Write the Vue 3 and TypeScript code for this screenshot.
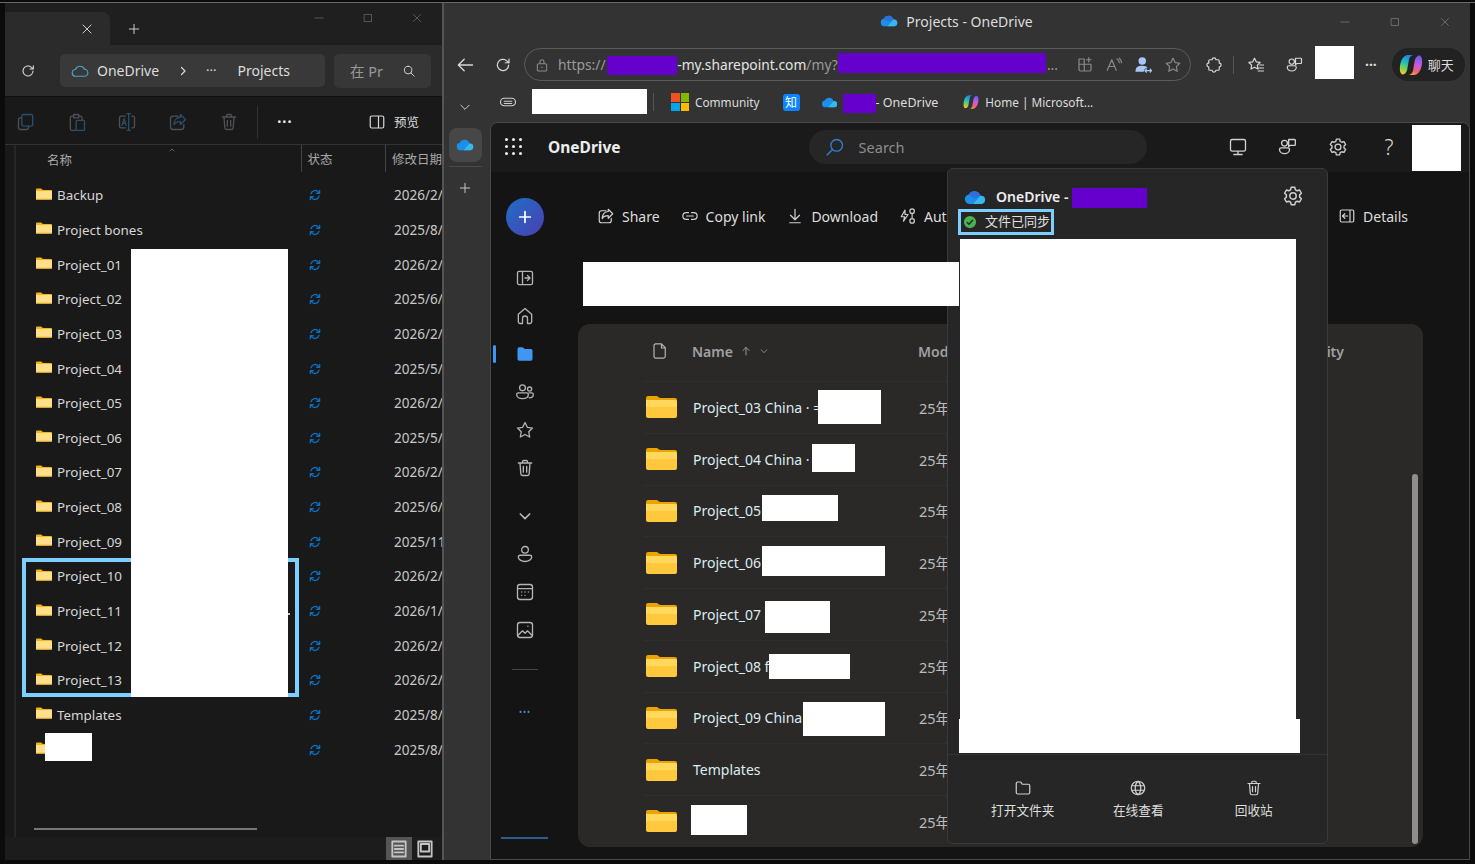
<script setup lang="ts">
const icons: Record<string, string> = {
  close: 'M5 5l14 14M19 5L5 19',
  plus: 'M12 4v16M4 12h16',
  min: 'M4 12h16',
  max: 'M5 5h14v14H5z',
  refresh: 'M19.5 12a7.5 7.5 0 1 1-2.4-5.5L20 9M20 4v5h-5',
  search: 'M10.5 4a6.5 6.5 0 1 1 0 13a6.5 6.5 0 0 1 0-13zM15.5 15.5L21 21',
  chevR: 'M9 5l7 7-7 7',
  chevD: 'M5 9l7 7 7-7',
  cloud: 'M6.5 19a4.5 4.5 0 0 1-.6-9A6.5 6.5 0 0 1 18 9.6 4.7 4.7 0 0 1 17.5 19z',
  copyA: 'M7 7H5a2 2 0 0 0-2 2v10a2 2 0 0 0 2 2h8a2 2 0 0 0 2-2v-2',
  copyB: 'M9 3h9a2 2 0 0 1 2 2v10a2 2 0 0 1-2 2H9a2 2 0 0 1-2-2V5a2 2 0 0 1 2-2z',
  pasteA: 'M8 5H6a2 2 0 0 0-2 2v13a2 2 0 0 0 2 2h4M8 3h6v4H8zM14 5h2a2 2 0 0 1 2 2v2',
  pasteB: 'M12 10h8a1 1 0 0 1 1 1v10a1 1 0 0 1-1 1h-8a1 1 0 0 1-1-1V11a1 1 0 0 1 1-1z',
  renameA: 'M10 5H5a2 2 0 0 0-2 2v10a2 2 0 0 0 2 2h5M18 5h1a2 2 0 0 1 2 2v10a2 2 0 0 1-2 2h-1',
  renameB: 'M14 2v20M12 2h4M12 22h4M6 16l2.500-8L11 16M7 13.500h3',
  shareA: 'M12 5H6a3 3 0 0 0-3 3v10a3 3 0 0 0 3 3h10a3 3 0 0 0 3-3v-3',
  shareB: 'M15 3l6 6-6 6v-3.500c-4 0-6.500 1-8 4 0-5 3-9 8-9.500z',
  share: 'M12 5H6a3 3 0 0 0-3 3v10a3 3 0 0 0 3 3h10a3 3 0 0 0 3-3v-3M15 3l6 6-6 6v-3.500c-4 0-6.500 1-8 4 0-5 3-9 8-9.500z',
  trash: 'M4 6h16M9 6V4.500A1.500 1.500 0 0 1 10.500 3h3A1.500 1.500 0 0 1 15 4.500V6M6 6l1 13a2 2 0 0 0 2 2h6a2 2 0 0 0 2-2l1-13M10 10v7M14 10v7',
  panel: 'M5 4h14a2 2 0 0 1 2 2v12a2 2 0 0 1-2 2H5a2 2 0 0 1-2-2V6a2 2 0 0 1 2-2zM14 4v16',
  lock: 'M7 10h10a2 2 0 0 1 2 2v7a2 2 0 0 1-2 2H7a2 2 0 0 1-2-2v-7a2 2 0 0 1 2-2zM9 10V7a3 3 0 0 1 6 0v3M12 15v1',
  back: 'M21 12H4M11 5l-7 7 7 7',
  apps: 'M4 4h7v16H6a2 2 0 0 1-2-2zM11 11H4M11 11h9v7a2 2 0 0 1-2 2h-7M17 2v6M14 5h6',
  read: 'M3 19L9 5l6 14M5.500 14h7M16 4c2 1 3 3 3 5M19 3c2 1.500 3 3.500 3 6',
  star: 'M12 3l2.800 5.800 6.200.9-4.500 4.400 1.100 6.300L12 17.400l-5.600 3 1.100-6.300L3 9.700l6.200-.9z',
  puzzle: 'M9.500 5a2.500 2.500 0 0 1 5 0h3a1.500 1.500 0 0 1 1.500 1.500v3a2.500 2.500 0 0 1 0 5v3a1.500 1.500 0 0 1-1.500 1.500h-3a2.500 2.500 0 0 1-5 0h-3A1.500 1.500 0 0 1 5 17.500v-3a2.500 2.500 0 0 1 0-5v-3A1.500 1.500 0 0 1 6.500 5z',
  favs: 'M10 3l2.300 4.800 5.200.8-3.700 3.600.9 5.200L10 15l-4.700 2.400.9-5.200L2.500 8.600l5.200-.8zM17 12h5M16 16h6M15 20h7',
  people: 'M9 4a3.500 3.500 0 1 1 0 7a3.500 3.500 0 0 1 0-7zM5 13h8a2 2 0 0 1 2 2c0 3-3 5-6 5s-6-2-6-5a2 2 0 0 1 2-2zM14 3h7a1 1 0 0 1 1 1v5a1 1 0 0 1-1 1h-5l-2 1.500z',
  clip: 'M6 7h11a5 5 0 0 1 0 10H7a5 5 0 0 1 0-10M7 11h10M7 14h10',
  link: 'M10 7.500H7a4.500 4.500 0 0 0 0 9h3M14 7.500h3a4.500 4.500 0 0 1 0 9h-3M7.500 12h9',
  download: 'M12 3v14M6 11l6 6 6-6M5 21h14',
  flow: 'M17.500 2.500a3 3 0 1 1 0 6a3 3 0 0 1 0-6zM17.500 15.500a3 3 0 1 1 0 6a3 3 0 0 1 0-6zM17.500 8.500v7M8 4L3 13h4.500l-1.500 6 6-9H8z',
  details: 'M5 4h14a2 2 0 0 1 2 2v12a2 2 0 0 1-2 2H5a2 2 0 0 1-2-2V6a2 2 0 0 1 2-2zM16 4v16M13 12H6M9 9l-3 3 3 3',
  railPanel: 'M5 4h14a2 2 0 0 1 2 2v12a2 2 0 0 1-2 2H5a2 2 0 0 1-2-2V6a2 2 0 0 1 2-2zM9 4v16M12 12h6M15 9l3 3-3 3',
  home: 'M4 10l8-7 8 7v9a2 2 0 0 1-2 2h-3v-6a3 3 0 0 0-6 0v6H6a2 2 0 0 1-2-2z',
  team: 'M9 3.500a3.500 3.500 0 1 1 0 7a3.500 3.500 0 0 1 0-7zM17.500 6a2.500 2.500 0 1 1 0 5a2.500 2.500 0 0 1 0-5zM4 13h10a2 2 0 0 1 2 2c0 3-3 5-7 5s-7-2-7-5a2 2 0 0 1 2-2zM17 13h3a2 2 0 0 1 2 2c0 2.500-2 4-5 4',
  person: 'M12 3a4 4 0 1 1 0 8a4 4 0 0 1 0-8zM6 13.500h12a2 2 0 0 1 2 2c0 3-3.500 5.500-8 5.500s-8-2.500-8-5.500a2 2 0 0 1 2-2z',
  calendar: 'M6 3h12a3 3 0 0 1 3 3v12a3 3 0 0 1-3 3H6a3 3 0 0 1-3-3V6a3 3 0 0 1 3-3zM3 8h18M8 12h.01M12 12h.01M16 12h.01M8 16h.01M12 16h.01',
  image: 'M6 3h12a3 3 0 0 1 3 3v12a3 3 0 0 1-3 3H6a3 3 0 0 1-3-3V6a3 3 0 0 1 3-3zM4 18l5-5 3 3 3-3 5 5M15.500 7.500h.01',
  doc: 'M6 2.500h8l5 5V19a2.500 2.500 0 0 1-2.500 2.500h-10A2.500 2.500 0 0 1 4 19V5a2.500 2.500 0 0 1 2-2.500zM14 2.500V8h5',
  up: 'M12 20V5M6 11l6-6 6 6',
  monitor: 'M5 3h14a2 2 0 0 1 2 2v10a2 2 0 0 1-2 2H5a2 2 0 0 1-2-2V5a2 2 0 0 1 2-2zM12 17v4M7 21h10',
  gear: 'M12 8.500a3.500 3.500 0 1 1 0 7a3.500 3.500 0 0 1 0-7zM10 2.500h4l.6 2.700 2 1.100 2.600-.8 2 3.500-2 1.800v2.400l2 1.800-2 3.500-2.600-.8-2 1.100-.6 2.700h-4l-.6-2.700-2-1.100-2.600.8-2-3.500 2-1.800v-2.400l-2-1.800 2-3.500 2.600.8 2-1.100z',
  folder: 'M3 6a2 2 0 0 1 2-2h4l3 2h7a2 2 0 0 1 2 2v10a2 2 0 0 1-2 2H5a2 2 0 0 1-2-2z',
  folderOut: 'M3 6a2 2 0 0 1 2-2h3.500c.5 0 1 .5 1.500 1.500L11 7h8a2 2 0 0 1 2 2v9a2 2 0 0 1-2 2H5a2 2 0 0 1-2-2z',
  globe: 'M12 3a9 9 0 1 1 0 18a9 9 0 0 1 0-18zM12 3c-5 4-5 14 0 18M12 3c5 4 5 14 0 18M3.500 9h17M3.500 15h17',
  sync: 'M5 10a7.500 7.500 0 0 1 13-3l2 2M20 4v5h-5M19 14a7.500 7.500 0 0 1-13 3l-2-2M4 20v-5h5',
  list: 'M4 3h16v18H4zM7 8h10M7 12h10M7 16h10',
  thumb: 'M4 3h16v18H4zM7 6h10v9H7z'
}

const copilotLeft = 'M9 2h5.500c-2.500.5-4 2-4.500 4.500l-1.800 10c-.5 3-2.500 5-5.200 5C1 20 .5 17 1 13 1.700 7.500 4.500 2 9 2z'
const copilotRight = 'M15 22H9.500c2.500-.5 4-2 4.500-4.500l1.800-10c.5-3 2.500-5 5.200-5 2 1.500 2.500 4.500 2 8.500-.7 5.500-3.500 11-8 11z'

const cmdIcons = [
  ['copyA', 'copyB'], ['pasteA', 'pasteB'], ['renameA', 'renameB'], ['shareA', 'shareB']
]
const explorerRows = [
  ['Backup', '2026/2/'], ['Project bones', '2025/8/'], ['Project_01', '2026/2/'], ['Project_02', '2025/6/'],
  ['Project_03', '2026/2/'], ['Project_04', '2025/5/'], ['Project_05', '2026/2/'], ['Project_06', '2025/5/'],
  ['Project_07', '2026/2/'], ['Project_08', '2025/6/'], ['Project_09', '2025/11'], ['Project_10', '2026/2/'],
  ['Project_11', '2026/1/'], ['Project_12', '2026/2/'], ['Project_13', '2026/2/'], ['Templates', '2025/8/'], ['', '2025/8/']
]
const driveRows = ['Project_03 China · =', 'Project_04 China ·', 'Project_05', 'Project_06', 'Project_07 ,', 'Project_08 f', 'Project_09 China', 'Templates', '']
const railTop = ['railPanel', 'home', 'folder', 'team', 'star', 'trash']
const railBottom = ['person', 'calendar', 'image']

const masks = [
  { x: 131, y: 249, w: 157, h: 448, c: '#fff' },
  { x: 45, y: 733, w: 47, h: 28, c: '#fff' },
  { x: 532, y: 89, w: 115, h: 25, c: '#fff' },
  { x: 1315, y: 46, w: 39, h: 33, c: '#fff' },
  { x: 1412, y: 125, w: 49, h: 46, c: '#fff' },
  { x: 607, y: 56, w: 70, h: 19, c: '#6600cc' },
  { x: 838, y: 53, w: 208, h: 20, c: '#6600cc' },
  { x: 843, y: 94, w: 33, h: 19, c: '#6600cc' },
  { x: 583, y: 262, w: 376, h: 44, c: '#fff' },
  { x: 818, y: 390, w: 63, h: 34, c: '#fff' },
  { x: 812, y: 444, w: 43, h: 28, c: '#fff' },
  { x: 762, y: 495, w: 76, h: 26, c: '#fff' },
  { x: 762, y: 546, w: 123, h: 30, c: '#fff' },
  { x: 765, y: 601, w: 65, h: 32, c: '#fff' },
  { x: 769, y: 654, w: 81, h: 25, c: '#fff' },
  { x: 803, y: 702, w: 82, h: 34, c: '#fff' },
  { x: 691, y: 805, w: 56, h: 30, c: '#fff' }
]
</script>

<template>
  <div class="screen">
    <!-- File Explorer -->
    <section class="explorer">
      <div class="tabstrip">
        <div class="tab">
          <svg class="ic i14 light" viewBox="0 0 24 24"><path :d="icons.close" /></svg>
        </div>
        <svg class="ic i14 light newtab" viewBox="0 0 24 24"><path :d="icons.plus" /></svg>
        <div class="winctl ex-ctl">
          <svg class="ic i12" viewBox="0 0 24 24"><path :d="icons.min" /></svg>
          <svg class="ic i12" viewBox="0 0 24 24"><path :d="icons.max" /></svg>
          <svg class="ic i12" viewBox="0 0 24 24"><path :d="icons.close" /></svg>
        </div>
      </div>
      <div class="navbar">
        <svg class="ic i16 light nav-refresh" viewBox="0 0 24 24"><path :d="icons.refresh" /></svg>
        <div class="crumbs">
          <svg class="ic i18 cloud-out" viewBox="0 0 24 24"><path :d="icons.cloud" /></svg>
          <span class="crumb-a">OneDrive</span>
          <svg class="ic i12 light crumb-sep" viewBox="0 0 24 24"><path :d="icons.chevR" /></svg>
          <span class="crumb-dots">···</span>
          <span class="crumb-b">Projects</span>
        </div>
        <div class="ex-search">
          <span>在 Pr</span>
          <svg class="ic i14 light" viewBox="0 0 24 24"><path :d="icons.search" /></svg>
        </div>
      </div>
      <div class="cmdbar">
        <svg v-for="c in cmdIcons" :key="c[0]" class="ic i20 dim" viewBox="0 0 24 24"><path :d="icons[c[0]]" /><path class="acc" :d="icons[c[1]]" /></svg>
        <svg class="ic i20 dim" viewBox="0 0 24 24"><path :d="icons.trash" /></svg>
        <i class="cmd-sep"></i>
        <span class="cmd-dots">•••</span>
        <span class="preview">
          <svg class="ic i18 light" viewBox="0 0 24 24"><path :d="icons.panel" /></svg>
          预览
        </span>
      </div>
      <div class="ex-main">
        <div class="ex-head">
          <span class="h-name">名称<svg class="ic caret" viewBox="0 0 24 24"><path d="M4 16l8-8 8 8" /></svg></span>
          <span class="h-status">状态</span>
          <span class="h-date">修改日期</span>
        </div>
        <div class="ex-list">
          <div v-for="(r, i) in explorerRows" :key="i" class="ex-row">
            <span class="ex-name">
              <svg class="ex-folder" viewBox="0 0 16 12">
                <path d="M0 1.500A1 1 0 0 1 1 .5h4l2 1.500h8a1 1 0 0 1 1 1V5H0z" fill="#f5b316" />
                <path d="M0 3h16v8a.800.800 0 0 1-.800.800H.800A.800.800 0 0 1 0 11z" fill="#ffe08a" />
                <path d="M0 10.800h16V11a.800.800 0 0 1-.800.800H.800A.800.800 0 0 1 0 11z" fill="#e0a020" />
              </svg>
              {{ r[0] }}
            </span>
            <svg class="ic i14 sync" viewBox="0 0 24 24"><path :d="icons.sync" /></svg>
            <span class="ex-date">{{ r[1] }}</span>
          </div>
        </div>
        <div class="ex-scroll"></div>
      </div>
      <div class="ex-status">
        <span class="view on"><svg class="ic i20 frame" viewBox="0 0 24 24"><path :d="icons.list" /></svg></span>
        <span class="view"><svg class="ic i20 frame" viewBox="0 0 24 24"><path :d="icons.thumb" /></svg></span>
      </div>
    </section>

    <!-- Browser -->
    <section class="browser">
      <div class="titlebar">
        <span class="title">
          <svg class="od-fill i-od" viewBox="0 0 24 16">
            <path d="M6 15a5 5 0 0 1-1-9.900A7 7 0 0 1 18 6a4.500 4.500 0 0 1 1 9z" fill="#1c8fe8" />
            <path d="M5 5.100A7 7 0 0 1 18 6l-6 3-7-3.900z" fill="#2f6fd8" />
            <path d="M10 15l8-9a4.500 4.500 0 0 1 1 9z" fill="#38b8f0" />
          </svg>
          Projects - OneDrive
        </span>
        <div class="winctl br-ctl">
          <svg class="ic i12" viewBox="0 0 24 24"><path :d="icons.min" /></svg>
          <svg class="ic i12" viewBox="0 0 24 24"><path :d="icons.max" /></svg>
          <svg class="ic i12" viewBox="0 0 24 24"><path :d="icons.close" /></svg>
        </div>
      </div>
      <div class="addrbar">
        <svg class="ic i20 light" viewBox="0 0 24 24"><path :d="icons.back" /></svg>
        <svg class="ic i18 light addr-refresh" viewBox="0 0 24 24"><path :d="icons.refresh" /></svg>
        <div class="pill">
          <svg class="ic i16 grey" viewBox="0 0 24 24"><path :d="icons.lock" /></svg>
          <span class="url"><span class="url-g">https://</span><span class="url-gap"></span><span class="url-w">-my.sharepoint.com</span><span class="url-g">/my?</span><span class="url-gap2"></span><span class="url-g">...</span></span>
          <svg class="ic i18 grey p1" viewBox="0 0 24 24"><path :d="icons.apps" /></svg>
          <svg class="ic i18 grey p2" viewBox="0 0 24 24"><path :d="icons.read" /></svg>
          <svg class="i18 p2" viewBox="0 0 24 24" fill="#a6c8f8">
            <circle cx="11" cy="6.500" r="5" />
            <path d="M2 21c0-6 3-8 9-8 4 0 6 1 7 3-3 0-5 2-5 5z" />
            <path d="M15 19.500h8M17 17l-2.500 2.500L17 22M21 17l2.500 2.500L21 22" stroke="#a6c8f8" stroke-width="1.500" fill="none" />
          </svg>
          <svg class="ic i18 grey p3" viewBox="0 0 24 24"><path :d="icons.star" /></svg>
        </div>
        <svg class="ic i18 light t1" viewBox="0 0 24 24"><path :d="icons.puzzle" /></svg>
        <i class="tool-sep"></i>
        <svg class="ic i18 light t2" viewBox="0 0 24 24"><path :d="icons.favs" /></svg>
        <svg class="ic i18 light t3" viewBox="0 0 24 24"><path :d="icons.people" /></svg>
        <span class="more">···</span>
        <div class="chat">
          <svg class="i24" viewBox="0 0 24 24">
            <defs>
              <linearGradient id="copL" x1="0.6" y1="0" x2="0.3" y2="1">
                <stop offset="0" stop-color="#1f7ff0" />
                <stop offset="0.45" stop-color="#22c3b0" />
                <stop offset="0.75" stop-color="#8fd04a" />
                <stop offset="1" stop-color="#f6c92f" />
              </linearGradient>
              <linearGradient id="copR" x1="0.6" y1="0" x2="0.4" y2="1">
                <stop offset="0" stop-color="#6d5cf0" />
                <stop offset="0.45" stop-color="#c25ce0" />
                <stop offset="0.8" stop-color="#f0607a" />
                <stop offset="1" stop-color="#f59a30" />
              </linearGradient>
            </defs>
            <path :d="copilotLeft" fill="url(#copL)" />
            <path :d="copilotRight" fill="url(#copR)" />
          </svg>
          <span>聊天</span>
        </div>
      </div>
      <div class="favbar">
        <svg class="ic i14 light fav-chev" viewBox="0 0 24 24"><path :d="icons.chevD" /></svg>
        <svg class="ic i18 pale fav-clip" viewBox="0 0 24 24"><path :d="icons.clip" /></svg>
        <i class="fav-sep"></i>
        <span class="mslogo"><i class="r"></i><i class="g"></i><i class="b"></i><i class="y"></i></span>
        <span class="fav-t">Community</span>
        <span class="zhi">知</span>
        <svg class="i-od2" viewBox="0 0 24 16">
          <path d="M6 15a5 5 0 0 1-1-9.900A7 7 0 0 1 18 6a4.500 4.500 0 0 1 1 9z" fill="#1c8fe8" />
          <path d="M10 15l8-9a4.500 4.500 0 0 1 1 9z" fill="#38b8f0" />
        </svg>
        <span class="fav-t fav-od">- OneDrive</span>
        <svg class="i16 fav-cop" viewBox="0 0 24 24">
          <path :d="copilotLeft" fill="url(#copL)" />
          <path :d="copilotRight" fill="url(#copR)" />
        </svg>
        <span class="fav-t">Home | Microsoft...</span>
      </div>
      <div class="br-body">
        <aside class="br-side">
          <span class="side-active">
            <svg class="i-od3" viewBox="0 0 24 16">
              <path d="M6 15a5 5 0 0 1-1-9.900A7 7 0 0 1 18 6a4.500 4.500 0 0 1 1 9z" fill="#1c8fe8" />
              <path d="M10 15l8-9a4.500 4.500 0 0 1 1 9z" fill="#38b8f0" />
            </svg>
          </span>
          <i class="side-line"></i>
          <svg class="ic i14 pale side-plus" viewBox="0 0 24 24"><path :d="icons.plus" /></svg>
        </aside>
        <div class="page">
          <header class="topbar">
            <span class="waffle"><i v-for="n in 9" :key="n"></i></span>
            <b class="brand">OneDrive</b>
            <div class="searchbox">
              <svg class="ic i20 blue" viewBox="0 0 24 24"><path d="M14 3a7 7 0 1 1 0 14a7 7 0 0 1 0-14zM9 15l-6.500 6.500" /></svg>
              <span>Search</span>
            </div>
            <svg class="ic i20 pale tb1" viewBox="0 0 24 24"><path :d="icons.monitor" /></svg>
            <svg class="ic i20 pale tb2" viewBox="0 0 24 24"><path :d="icons.people" /></svg>
            <svg class="ic i20 pale tb3" viewBox="0 0 24 24"><path :d="icons.gear" /></svg>
            <span class="help">?</span>
          </header>
          <div class="page-body">
            <nav class="rail">
              <span class="fab"><svg class="ic i16 white" viewBox="0 0 24 24"><path :d="icons.plus" /></svg></span>
              <span class="rail-item" v-for="(n, i) in railTop" :key="n" :class="{ cur: i === 2 }">
                <svg v-if="n === 'folder'" class="i20" viewBox="0 0 24 24" fill="#3f97f2"><path :d="icons.folder" /></svg>
                <svg v-else class="ic i20 soft" viewBox="0 0 24 24"><path :d="icons[n]" /></svg>
              </span>
              <span class="rail-item more-item"><svg class="ic i16 soft heavy" viewBox="0 0 24 24"><path :d="icons.chevD" /></svg></span>
              <span class="rail-item" v-for="n in railBottom" :key="n"><svg class="ic i20 soft" viewBox="0 0 24 24"><path :d="icons[n]" /></svg></span>
              <i class="rail-line"></i>
              <span class="rail-dots">•••</span>
              <i class="rail-bar"></i>
            </nav>
            <main class="content">
              <div class="commands">
                <span class="cmd"><svg class="ic i18 pale" viewBox="0 0 24 24"><path :d="icons.share" /></svg>Share</span>
                <span class="cmd"><svg class="ic i18 pale" viewBox="0 0 24 24"><path :d="icons.link" /></svg>Copy link</span>
                <span class="cmd"><svg class="ic i18 pale" viewBox="0 0 24 24"><path :d="icons.download" /></svg>Download</span>
                <span class="cmd"><svg class="ic i18 pale" viewBox="0 0 24 24"><path :d="icons.flow" /></svg>Aut</span>
                <span class="cmd details"><svg class="ic i18 pale" viewBox="0 0 24 24"><path :d="icons.details" /></svg>Details</span>
              </div>
              <div class="card">
                <div class="card-head">
                  <svg class="ic i18 soft" viewBox="0 0 24 24"><path :d="icons.doc" /></svg>
                  <span class="col-name">Name
                    <svg class="ic i12 soft" viewBox="0 0 24 24"><path :d="icons.up" /></svg>
                    <svg class="ic i10 soft" viewBox="0 0 24 24"><path :d="icons.chevD" /></svg>
                  </span>
                  <span>Mod</span>
                  <span>vity</span>
                </div>
                <div v-for="(n, i) in driveRows" :key="i" class="card-row">
                  <svg class="od-folder" viewBox="0 0 31 22">
                    <path d="M0 2a2 2 0 0 1 2-2h9l3 2h15a2 2 0 0 1 2 2v6H0z" fill="#eaa300" />
                    <path d="M0 4h29a2 2 0 0 1 2 2v14a2 2 0 0 1-2 2H2a2 2 0 0 1-2-2z" fill="#ffc83d" />
                    <path d="M0 4h29a2 2 0 0 1 2 2v5H0z" fill="#ffd85c" />
                  </svg>
                  <span class="card-name">{{ n }}</span>
                  <span class="card-date">25年</span>
                </div>
                <i class="card-scroll"></i>
              </div>
            </main>
          </div>
        </div>
      </div>
    </section>

    <!-- Overlays -->
    <div class="flyout">
      <div class="fly-head">
        <svg class="i-fly" viewBox="0 0 24 16">
          <path d="M6 15a5 5 0 0 1-1-9.900A7 7 0 0 1 18 6a4.500 4.500 0 0 1 1 9z" fill="#1c8fe8" />
          <path d="M5 5.100A7 7 0 0 1 18 6l-6 3-7-3.900z" fill="#2f6fd8" />
          <path d="M10 15l8-9a4.500 4.500 0 0 1 1 9z" fill="#38b8f0" />
        </svg>
        <b>OneDrive -</b>
        <i class="fly-purple"></i>
        <svg class="ic i22 pale fly-gear" viewBox="0 0 24 24"><path :d="icons.gear" /></svg>
      </div>
      <div class="fly-status">
        <svg class="i14" viewBox="0 0 16 16"><circle cx="8" cy="8" r="7" fill="#4caf50" /><path d="M4.500 8.200l2.300 2.300 4.500-4.700" stroke="#1c2a1c" stroke-width="1.600" fill="none" /></svg>
        <span>文件已同步</span>
      </div>
      <div class="fly-white-a"></div>
      <div class="fly-white-b"></div>
      <div class="fly-foot">
        <span class="fly-act"><svg class="ic i18 pale" viewBox="0 0 24 24"><path :d="icons.folderOut" /></svg>打开文件夹</span>
        <span class="fly-act"><svg class="ic i18 pale" viewBox="0 0 24 24"><path :d="icons.globe" /></svg>在线查看</span>
        <span class="fly-act"><svg class="ic i18 pale" viewBox="0 0 24 24"><path :d="icons.trash" /></svg>回收站</span>
      </div>
    </div>
    <div class="hl"></div>
    <i class="speck"></i>
    <i v-for="(m, i) in masks" :key="i" class="mask" :style="{ left: m.x + 'px', top: m.y + 'px', width: m.w + 'px', height: m.h + 'px', background: m.c }"></i>
  </div>
</template>

<style>
html, body { margin: 0; background: #0a0a0a; }
</style>

<style scoped>
.screen {
  position: relative; width: 1475px; height: 864px; overflow: hidden; box-sizing: border-box;
  display: flex; padding: 3px 5px 4px 5px; background: #0b0b0b;
  border-top: 0; color: #ddd;
  font-family: "Noto Sans", "Noto Sans CJK SC", sans-serif;
}
.screen::before { content: ""; position: absolute; left: 0; right: 0; top: 2px; height: 1px; background: #6a6a6a; }
.ic { fill: none; stroke: currentColor; stroke-width: 1.6; stroke-linecap: round; stroke-linejoin: round; flex: none; display: block; }
.i10 { width: 10px; height: 10px; } .i12 { width: 12px; height: 12px; } .i14 { width: 14px; height: 14px; }
.i16 { width: 16px; height: 16px; } .i18 { width: 18px; height: 18px; } .i20 { width: 20px; height: 20px; }
.i22 { width: 22px; height: 22px; } .i24 { width: 24px; height: 24px; }
.light { color: #d8d8d8; } .pale { color: #d0d0d0; } .soft { color: #b4b4b4; } .grey { color: #8a8a8a; }
.dim { color: #4e5054; } .white { color: #fff; stroke-width: 2.6; } .blue { color: #2f80d0; }
.acc { stroke: #27506e; }
.heavy { stroke-width: 2.6; }
.frame { color: #c4c4c4; stroke-width: 2.2; }

/* explorer */
.explorer { width: 437px; flex: none; display: flex; flex-direction: column; background: #191919; border-right: 2px solid #555; overflow: hidden; }
.tabstrip { height: 42px; flex: none; background: #1f1f1f; display: flex; align-items: flex-end; position: relative; }
.tab { width: 105px; height: 33px; background: #2b2b2b; border-top-right-radius: 8px; display: flex; align-items: center; justify-content: flex-end; padding-right: 16px; box-sizing: border-box; }
.newtab { margin: 0 0 9px 17px; }
.winctl { margin-left: auto; align-self: flex-start; display: flex; color: #666; }
.ex-ctl { gap: 37px; padding: 9px 19px 0 0; }
.navbar { height: 52px; flex: none; background: #2b2b2b; display: flex; align-items: center; border-bottom: 1px solid #111; box-sizing: border-box; }
.nav-refresh { margin-left: 15px; }
.crumbs { margin-left: 24px; width: 265px; height: 33px; background: #393939; border-radius: 5px; display: flex; align-items: center; box-sizing: border-box; padding-left: 11px; flex: none; }
.cloud-out { color: #4c9fc8; }
.crumb-a { margin: -1px 0 0 8px; font-size: 14px; color: #ddd; }
.crumb-sep { margin-left: 18px; stroke-width: 2.4; }
.crumb-dots { margin: -1px 0 0 17px; font-size: 13px; color: #ddd; }
.crumb-b { margin: -1px 0 0 21px; font-size: 14px; color: #ddd; }
.ex-search { margin-left: 9px; width: 97px; height: 34px; background: #373737; border-radius: 5px; display: flex; align-items: center; justify-content: space-between; box-sizing: border-box; padding: 0 15px 0 16px; color: #999; font-size: 14.500px; flex: none; }
.cmdbar { height: 48px; flex: none; background: #191919; border-bottom: 1px solid #333; display: flex; align-items: center; gap: 30.700px; padding: 2px 0 0 11px; box-sizing: border-box; }
.cmd-sep { width: 1px; height: 32px; background: #333; margin-left: -12px; }
.cmd-dots { font-size: 11px; letter-spacing: 1px; color: #eee; margin-left: -12px; }
.preview { margin-left: auto; margin-right: 23px; display: flex; align-items: center; gap: 8px; font-size: 12.500px; color: #ddd; }
.ex-main { flex: 1; position: relative; border-left: 2px solid #262626; margin-left: 9px; }
.ex-head { height: 27px; display: flex; align-items: center; font-size: 12.500px; color: #a8a8a8; position: relative; }
.h-name { position: relative; margin-left: 31px; width: 259px; padding-top: 2px; }
.caret { position: absolute; width: 10px; height: 6px; left: 120px; top: -1px; fill: none; stroke: #aaa; stroke-width: 2; }
.h-status { width: 85px; height: 27px; line-height: 29px; border-left: 1px solid #444; padding-left: 5px; box-sizing: border-box; }
.h-date { height: 27px; line-height: 29px; border-left: 1px solid #444; padding-left: 6px; white-space: nowrap; }
.ex-list { padding-top: 6px; }
.ex-row { height: 34.650px; display: flex; align-items: center; }
.ex-name { width: 281px; padding-left: 20px; box-sizing: border-box; display: flex; align-items: center; gap: 5px; font-size: 13.400px; color: #d6d6d6; flex: none; white-space: nowrap; }
.ex-folder { width: 16px; height: 12px; flex: none; margin-top: -3px; }
.sync { color: #0a6fc2; stroke-width: 2.200; margin-left: 11px; }
.ex-date { margin-left: 72px; font-size: 13.500px; color: #c8c8c8; white-space: nowrap; }
.ex-scroll { position: absolute; left: 18px; bottom: 7px; width: 223px; height: 2px; background: #777; }
.ex-status { height: 23px; flex: none; background: #1c1c1c; display: flex; justify-content: flex-end; padding-right: 4px; gap: 0; }
.view { width: 26px; height: 23px; display: flex; align-items: center; justify-content: center; }
.view.on { background: #555; }

/* browser */
.browser { flex: 1; min-width: 0; display: flex; flex-direction: column; background: #333; }
.titlebar { height: 42px; flex: none; position: relative; display: flex; justify-content: center; }
.title { display: flex; align-items: center; gap: 8px; font-size: 14px; color: #ddd; margin-left: -1px; padding-bottom: 6px; }
.i-od { width: 18px; height: 12px; }
.br-ctl { position: absolute; right: 19px; top: 13px; gap: 38px; color: #777; }
.addrbar { height: 39px; flex: none; display: flex; align-items: center; }
.addrbar > .i20:first-child { margin-left: 11px; }
.addr-refresh { margin-left: 19px; }
.pill { margin-left: 12px; width: 667px; height: 33px; border: 1px solid #5c5c5c; border-radius: 17px; box-sizing: border-box; display: flex; align-items: center; padding-left: 9px; flex: none; }
.url { margin: -1px 0 0 8px; font-size: 13.800px; white-space: nowrap; display: flex; width: 500px; }
.url-g { color: #9a9a9a; } .url-w { color: #e4e4e4; }
.url-gap { width: 72px; } .url-gap2 { width: 210px; }
.p1 { margin-left: 18px; } .p2 { margin-left: 11px; } .p3 { margin-left: 12px; }
.t1 { margin-left: 14px; }
.tool-sep { width: 1px; height: 18px; background: #555; margin-left: 10px; }
.t2 { margin-left: 13px; } .t3 { margin-left: 20px; }
.more { margin-left: 62px; font-size: 14px; font-weight: 700; color: #ddd; }
.chat { margin-left: 15px; width: 73px; height: 33px; border-radius: 17px; background: #222; display: flex; align-items: center; gap: 5px; padding-left: 7px; box-sizing: border-box; font-size: 13px; color: #ddd; flex: none; }
.favbar { height: 36px; flex: none; display: flex; align-items: center; font-size: 11.800px; }
.fav-chev { margin: 10px 0 0 14px; }
.fav-clip { margin-left: 27px; }
.fav-sep { width: 1px; height: 18px; background: #555; margin-left: 136px; }
.mslogo { margin-left: 17px; width: 18px; height: 18px; display: grid; grid-template-columns: 1fr 1fr; gap: 1px; flex: none; }
.mslogo .r { background: #f25022; } .mslogo .g { background: #7fba00; } .mslogo .b { background: #00a4ef; } .mslogo .y { background: #ffb900; }
.fav-t { color: #ddd; margin-left: 6px; white-space: nowrap; }
.zhi { margin-left: 23px; width: 17px; height: 17px; border-radius: 3px; background: #0a84ff; color: #fff; font-size: 12px; line-height: 17px; text-align: center; flex: none; }
.i-od2 { width: 17px; height: 11px; margin-left: 21px; flex: none; }
.fav-od { margin-left: 38px; font-size: 12.500px; }
.fav-cop { margin-left: 25px; }
.br-body { flex: 1; min-height: 0; display: flex; margin-top: 2px; }
.br-side { width: 46px; flex: none; display: flex; flex-direction: column; align-items: center; padding: 6px 4px 0 0; box-sizing: border-box; }
.side-active { width: 33px; height: 34px; border-radius: 8px; background: #474747; display: flex; align-items: center; justify-content: center; flex: none; }
.i-od3 { width: 18px; height: 12px; }
.side-line { width: 33px; height: 1px; background: #4a4a4a; margin-top: 4px; flex: none; }
.side-plus { margin-top: 14px; }
.page { flex: 1; min-width: 0; display: flex; flex-direction: column; background: #141414; border: 1px solid #4a4a4a; border-radius: 8px 8px 0 0; overflow: hidden; }
.topbar { height: 49px; flex: none; background: #1a1a1a; display: flex; align-items: center; padding-bottom: 2px; box-sizing: border-box; }
.waffle { margin-left: 14px; width: 17px; height: 17px; display: grid; grid-template-columns: repeat(3, 3px); grid-auto-rows: 3px; gap: 4px; flex: none; }
.waffle i { background: #eee; border-radius: 50%; }
.brand { margin-left: 26px; font-size: 15.500px; font-weight: 700; color: #eee; }
.searchbox { margin-left: 188px; width: 338px; height: 34px; border-radius: 17px; background: #262626; display: flex; align-items: center; gap: 14px; padding-left: 16px; box-sizing: border-box; font-size: 14.500px; color: #8c8c8c; flex: none; }
.tb1 { margin-left: 81px; } .tb2 { margin-left: 29px; } .tb3 { margin-left: 31px; }
.help { margin-left: 37px; font-size: 21px; color: #ddd; font-weight: 300; }
.page-body { flex: 1; min-height: 0; display: flex; }
.rail { width: 68px; flex: none; display: flex; flex-direction: column; align-items: center; padding-top: 26px; box-sizing: border-box; position: relative; }
.fab { width: 38px; height: 38px; flex: none; border-radius: 50%; background: linear-gradient(135deg, #1f6fc8, #4a3fb0); display: flex; align-items: center; justify-content: center; margin-bottom: 23px; }
.rail-item { height: 38px; flex: none; display: flex; align-items: center; justify-content: center; width: 100%; position: relative; }
.rail-item.cur::before { content: ""; position: absolute; left: 2px; top: 10px; width: 3px; height: 18px; border-radius: 2px; background: #3f97f2; }
.more-item { margin-top: 10px; }
.rail-line { width: 26px; height: 1px; background: #444; margin-top: 20px; flex: none; }
.rail-dots { font-size: 8px; letter-spacing: 1px; color: #4a90d9; margin-top: 36px; }
.rail-bar { position: absolute; left: 10px; bottom: 20px; width: 47px; height: 2px; background: #2a5f90; }
.content { flex: 1; min-width: 0; padding: 26px 46px 12px 19px; display: flex; flex-direction: column; box-sizing: border-box; }
.commands { height: 38px; flex: none; display: flex; align-items: center; gap: 21px; padding: 0 0 2px 19px; box-sizing: border-box; font-size: 14px; color: #ddd; }
.cmd { display: flex; align-items: center; gap: 7px; white-space: nowrap; }
.details { margin-left: auto; margin-right: 15px; }
.card { flex: 1; margin-top: 88px; background: #2a2928; border-radius: 12px; position: relative; overflow: hidden; min-height: 0; }
.card-head { height: 57px; display: grid; grid-template-columns: 41px 226px 401px auto; align-items: center; margin-left: 65px; padding: 0 0 3px 8px; box-sizing: border-box; font-size: 14px; font-weight: 600; color: #a0a0a0; margin-right: 76px; }
.col-name { display: flex; align-items: center; gap: 7px; }
.card-row { height: 51.750px; margin: 0 96px 0 65px; border-top: 1px solid #302f2e; box-sizing: border-box; display: flex; align-items: center; }
.od-folder { width: 31px; height: 22px; margin-left: 3px; flex: none; }
.card-name { margin-left: 16px; width: 226px; font-size: 14px; color: #ddecf0; white-space: nowrap; flex: none; }
.card-date { font-size: 14.500px; color: #bbb; }
.card-scroll { position: absolute; right: 5px; top: 150px; bottom: 3px; width: 6px; border-radius: 3px; background: #8e8e8e; }

/* flyout */
.flyout { position: absolute; left: 947px; top: 168px; width: 381px; height: 676px; box-sizing: border-box; background: #262626; border: 1px solid #3a3a3a; border-radius: 6px; display: flex; flex-direction: column; }
.fly-head { height: 40px; display: flex; align-items: center; padding: 17px 0 0 16px; flex: none; box-sizing: border-box; }
.i-fly { width: 22px; height: 15px; flex: none; }
.fly-head b { margin: -2px 0 0 10px; font-size: 14px; color: #eee; font-weight: 600; white-space: nowrap; }
.fly-purple { width: 75px; height: 20px; margin-left: 4px; background: #6600cc; }
.fly-gear { margin-left: auto; margin-right: 23px; margin-top: -4px; }
.fly-status { margin-left: 10px; width: 96px; height: 26px; box-sizing: border-box; border: 3px solid #7ccfff; display: flex; align-items: center; gap: 8px; padding-left: 2px; font-size: 13px; color: #e0e0e0; flex: none; }
.fly-status span { margin-top: -3px; white-space: nowrap; }
.fly-white-a { margin: 4px 0 0 12px; width: 336px; height: 480px; background: #fff; flex: none; }
.fly-white-b { margin-left: 11px; width: 341px; height: 34px; background: #fff; flex: none; }
.fly-foot { margin-top: 1px; border-top: 1px solid #333; flex: 1; display: flex; padding: 24px 0 0 17px; box-sizing: border-box; font-size: 12.700px; color: #ddd; }
.fly-act { display: flex; flex-direction: column; align-items: center; gap: 3px; width: 115.500px; white-space: nowrap; }
.hl { position: absolute; left: 22px; top: 558px; width: 277px; height: 139px; box-sizing: border-box; border: 4px solid #7ccfff; }
.speck { position: absolute; left: 288px; top: 613px; width: 2px; height: 2px; background: #ccc; }
.mask { position: absolute; display: block; }
</style>
